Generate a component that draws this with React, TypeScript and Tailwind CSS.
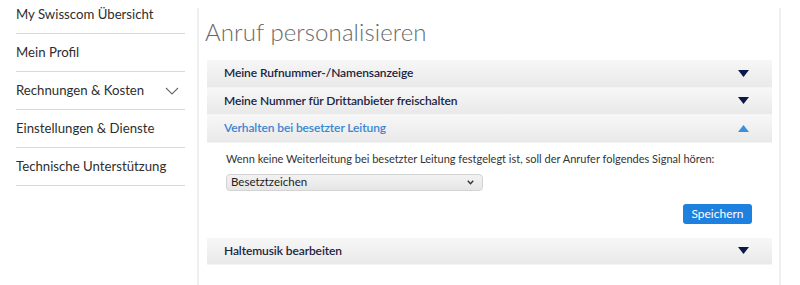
import React from 'react'

const NAV = [
  { label: 'My Swisscom Übersicht' },
  { label: 'Mein Profil' },
  { label: 'Rechnungen & Kosten', chevron: true },
  { label: 'Einstellungen & Dienste' },
  { label: 'Technische Unterstützung' },
]

function Arrow({ up = false }: { up?: boolean }) {
  return (
    <svg width="11" height="7" viewBox="0 0 11 7" className="shrink-0">
      {up ? (
        <polygon points="0,7 11,7 5.5,0" fill="#3b8fdc" />
      ) : (
        <polygon points="0,0 11,0 5.5,7" fill="#0b1849" />
      )}
    </svg>
  )
}

function Row({ title, open = false, up = false }: { title: string; open?: boolean; up?: boolean }) {
  return (
    <div className="h-[27.5px] flex items-center justify-between pl-[17px] pr-[23px] bg-gradient-to-b from-[#f7f7f7] to-[#e9e9e9] border-b border-[#f4f4f4]">
      <span className={`text-[12px] font-semibold tracking-[-0.1px] ${open ? 'text-[#3a86d4]' : 'text-[#1c2541]'}`}>{title}</span>
      <Arrow up={up} />
    </div>
  )
}

export default function App() {
  return (
    <div className="w-[800px] h-[285px] bg-white flex overflow-hidden font-['Lato',sans-serif]">
      {/* Navigation */}
      <aside className="ml-4 w-[169px] mt-[-4px]">
        {NAV.map(item => (
          <div key={item.label} className="h-[38px] flex items-center justify-between border-b border-[#d9d9d9]">
            <span className="text-[13.2px] text-[#2e2e2e]">{item.label}</span>
            {item.chevron && (
              <svg width="14" height="8" viewBox="0 0 14 8" className="mr-[6px]">
                <polyline points="1,1 7,7 13,1" fill="none" stroke="#6b6b6b" strokeWidth="1.1" />
              </svg>
            )}
          </div>
        ))}
      </aside>

      {/* Hauptbereich */}
      <main className="ml-[12px] mt-2 w-[584px] border-l-2 border-r-2 border-[#efefef] pl-[6px] pr-[7px]">
        <h1 className="mt-[10px] h-[42px] text-[24px] font-light text-[#696969] tracking-[0.1px] leading-[28px]">Anruf personalisieren</h1>

        <div className="ml-[2px]">
          <Row title="Meine Rufnummer-/Namensanzeige" />
          <Row title="Meine Nummer für Drittanbieter freischalten" />
          <Row title="Verhalten bei besetzter Leitung" open up />

          <div className="h-[95px] pl-[19px] pr-[20px] pt-[9px]">
            <p className="text-[11px] text-[#333] leading-[14px]">
              Wenn keine Weiterleitung bei besetzter Leitung festgelegt ist, soll der Anrufer folgendes Signal hören:
            </p>
            <div className="mt-[8px] w-[257px] h-[17px] rounded-[4px] border border-[#d3d3d3] bg-gradient-to-b from-[#f2f2f2] to-[#e6e6e6] flex items-center justify-between pl-[4px] pr-[8px]">
              <span className="text-[11.5px] text-[#222]">Besetztzeichen</span>
              <svg width="7" height="5" viewBox="0 0 7 5">
                <polyline points="0.8,0.8 3.5,3.8 6.2,0.8" fill="none" stroke="#333" strokeWidth="1.4" />
              </svg>
            </div>
            <div className="flex justify-end mt-[13px]">
              <button className="h-[20px] w-[69px] rounded-[3px] bg-[#1e81e0] text-white text-[12px] leading-none">Speichern</button>
            </div>
          </div>

          <Row title="Haltemusik bearbeiten" />
        </div>
      </main>
    </div>
  )
}
